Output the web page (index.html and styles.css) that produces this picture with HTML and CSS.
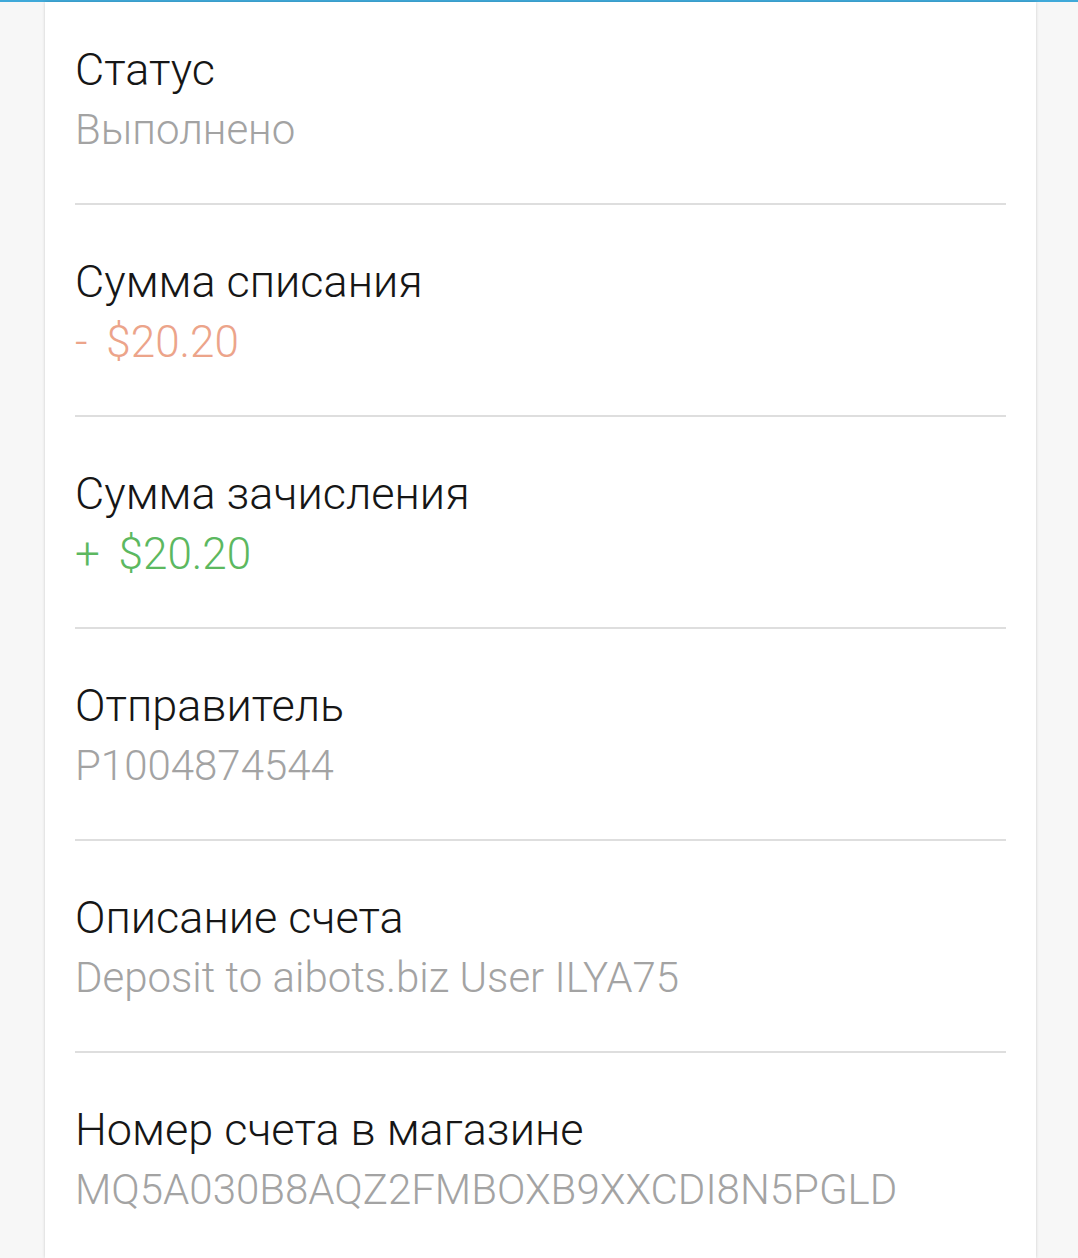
FILE: index.html
```html
<!DOCTYPE html>
<html lang="ru">
<head>
  <meta charset="UTF-8">
  <meta name="viewport" content="width=device-width, initial-scale=1.0">
  <title>Детали операции</title>
  <link rel="stylesheet" href="styles.css">
</head>
<body>
  <div class="top-line"></div>
  <main class="card">
    <div class="row first-row">
      <p class="row-title">Статус</p>
      <p class="row-value">Выполнено</p>
    </div>
    <div class="row">
      <p class="row-title">Сумма списания</p>
      <p class="row-value amount minus">- $20.20</p>
    </div>
    <div class="row">
      <p class="row-title">Сумма зачисления</p>
      <p class="row-value amount plus">+ $20.20</p>
    </div>
    <div class="row">
      <p class="row-title">Отправитель</p>
      <p class="row-value">P1004874544</p>
    </div>
    <div class="row">
      <p class="row-title">Описание счета</p>
      <p class="row-value">Deposit to aibots.biz User ILYA75</p>
    </div>
    <div class="row last-row">
      <p class="row-title">Номер счета в магазине</p>
      <p class="row-value">MQ5A030B8AQZ2FMBOXB9XXCDI8N5PGLD</p>
    </div>
  </main>
</body>
</html>
```

FILE: styles.css
```css
* {
  --page-background: #f7f7f7;
  --line-blue: #3fa9d9;
  --title-color: #161616;
  --value-color: #a3a3a3;
  --divider-color: #dedede;
  --minus-color: #eca48a;
  --plus-color: #5cb860;
}
body {
    margin: 0;
    overflow: hidden;
    height: 1258px;

    background-color: var(--page-background);
    font-family: Roboto, "Noto Sans", sans-serif;
}

.top-line {
    height: 2px;
    background-color: var(--line-blue);
}

.card {
    display: flex;
    flex-direction: column;
    width: 931px;
    height: 1256px;
    margin-left: 45px;
    padding: 0 30px;

    background-color: white;
    box-shadow: 0 0 3px rgba(0, 0, 0, 0.18);
}

.row {
    padding: 47px 0 43px 0;
    border-bottom: 2px solid var(--divider-color);
}
.first-row {
    padding-top: 38px;
}
.last-row {
    border-bottom: none;
}

.row-title,
.row-value {
    margin: 0;
    height: 60px;
    line-height: 60px;
    white-space: nowrap;
}
.row-title {
    color: var(--title-color);
    font-size: 45px;
    font-weight: 300;
}
.row-value {
    color: var(--value-color);
    font-size: 42px;
    font-weight: 300;
}
.amount {
    font-size: 44px;
    word-spacing: 8px;
}
.minus {
    color: var(--minus-color);
}
.plus {
    color: var(--plus-color);
}
```
